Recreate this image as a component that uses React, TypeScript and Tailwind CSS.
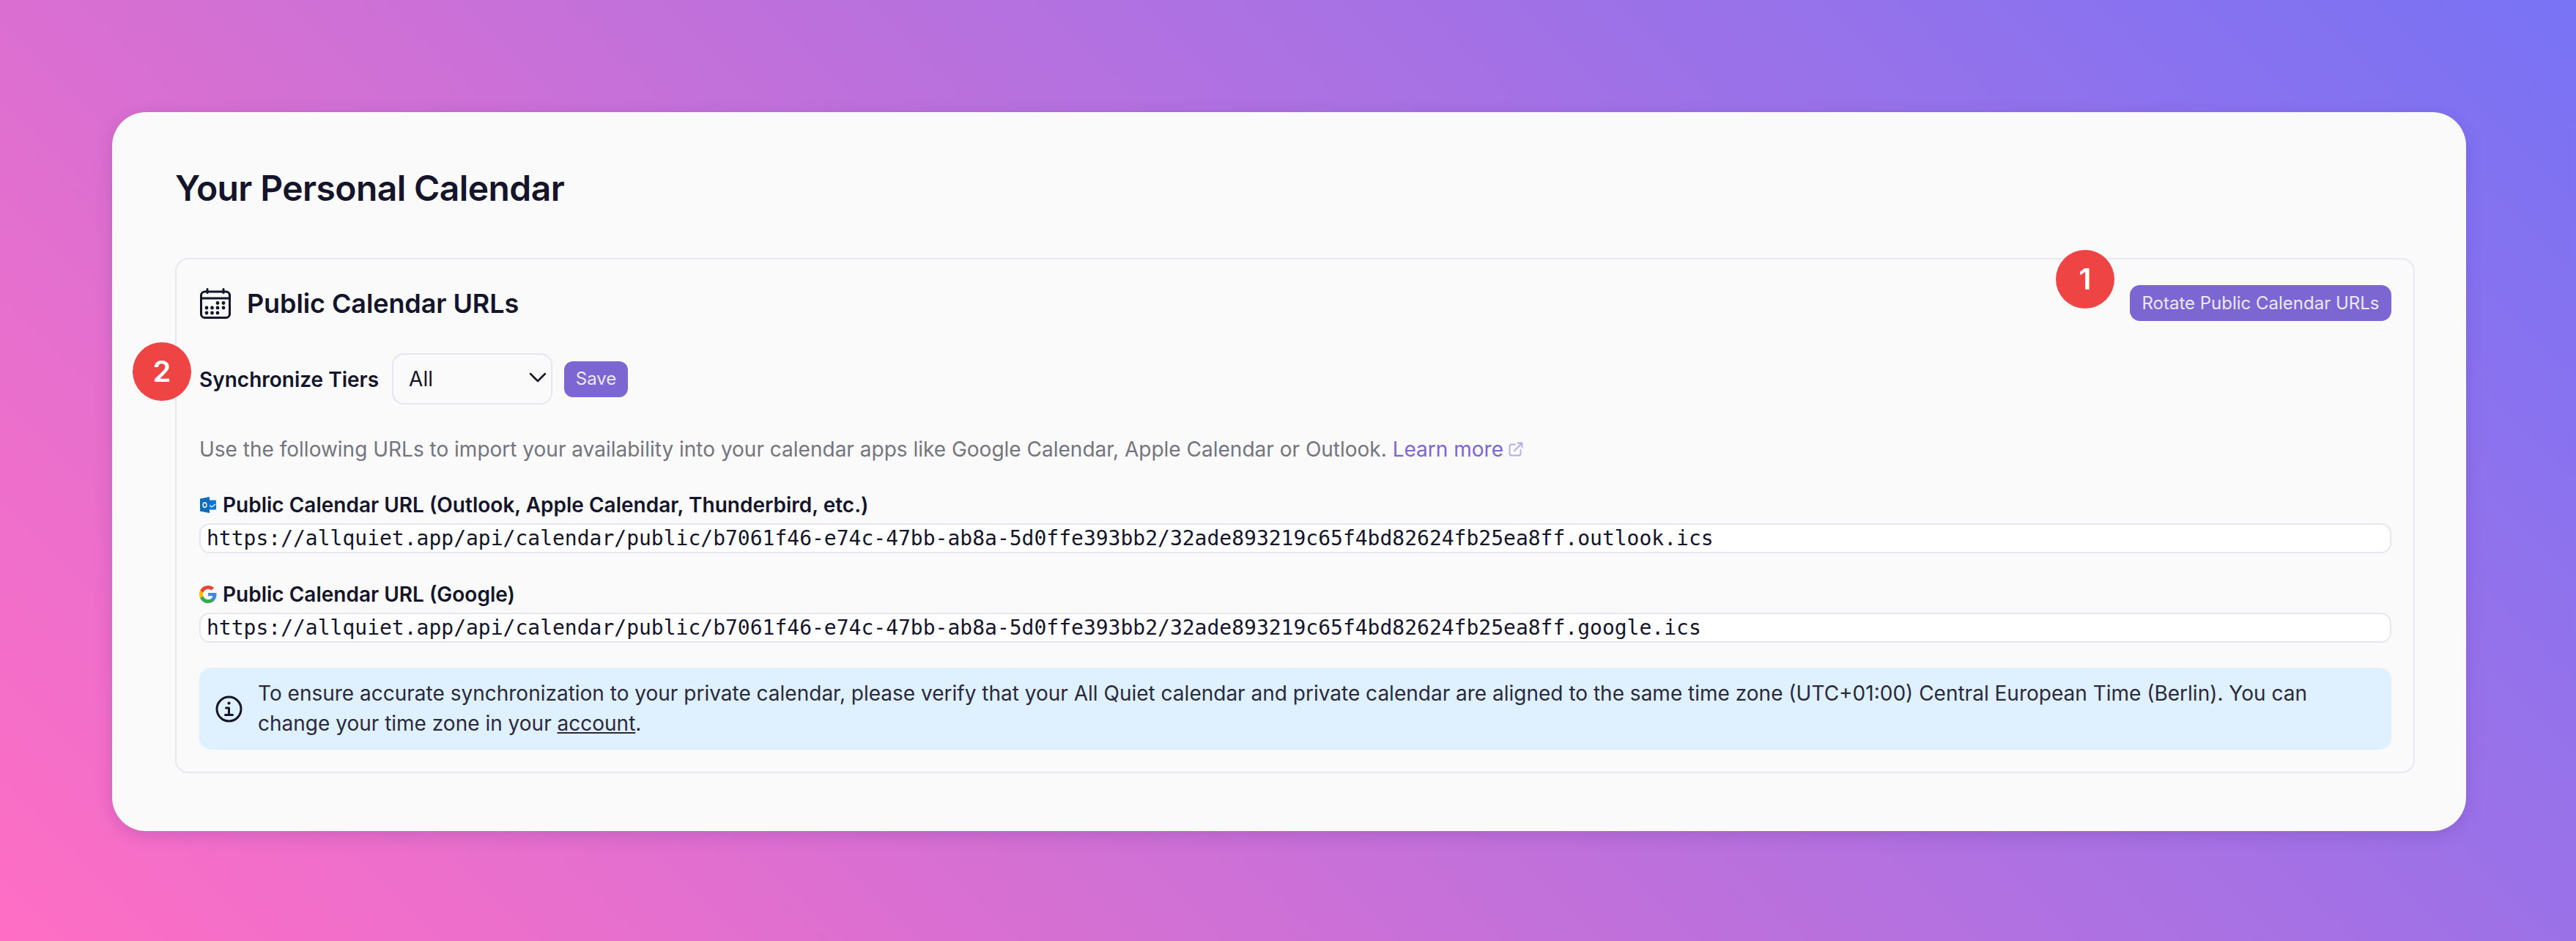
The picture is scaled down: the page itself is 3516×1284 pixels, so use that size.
import React from "react";

const ink = "text-[#14142b]";

function CalendarIcon() {
  return (
    <svg viewBox="0 0 42 42" className="w-[42px] h-[42px] shrink-0" fill="none" stroke="#14142b" strokeWidth="3" strokeLinecap="round">
      <path d="M10 1.5v5M32 1.5v5" />
      <rect x="1.5" y="5" width="39" height="35.5" rx="5" />
      <path d="M1.5 14h39" />
      <g fill="#14142b" stroke="none">
        <circle cx="24" cy="20.5" r="2.4" />
        <circle cx="32" cy="20.5" r="2.4" />
        <circle cx="9" cy="27" r="2.4" />
        <circle cx="16.500" cy="27" r="2.4" />
        <circle cx="24" cy="27" r="2.4" />
        <circle cx="32" cy="27" r="2.4" />
        <circle cx="9" cy="34" r="2.4" />
        <circle cx="16.500" cy="34" r="2.4" />
        <circle cx="24" cy="34" r="2.4" />
      </g>
    </svg>
  );
}

function OutlookIcon() {
  return (
    <svg viewBox="0 0 22 22" className="w-[22px] h-[22px] shrink-0 ml-[1px] mr-[2px]">
      <path d="M10 4.500h11a1 1 0 0 1 1 1v11a1 1 0 0 1-1 1H10z" fill="#0a78d4" />
      <path d="M12 11l4 2.800 5-3.800" fill="none" stroke="#fff" strokeWidth="1.300" />
      <path d="M0 2.500L13 0v22L0 19.500z" fill="#0f6cbd" />
      <ellipse cx="6.500" cy="11" rx="2.400" ry="3.200" fill="none" stroke="#fff" strokeWidth="1.400" />
    </svg>
  );
}

function GoogleIcon() {
  return (
    <svg viewBox="0 0 24 24" className="w-[24px] h-[24px] shrink-0 mr-[1px]">
      <path fill="#4285F4" d="M23.5 12.270c0-.800-.070-1.560-.200-2.300H12v4.350h6.450a5.500 5.500 0 0 1-2.390 3.610v3h3.870c2.260-2.090 3.570-5.160 3.570-8.660z" />
      <path fill="#34A853" d="M12 24c3.240 0 5.950-1.070 7.930-2.900l-3.870-3c-1.070.72-2.440 1.150-4.060 1.150-3.130 0-5.780-2.110-6.730-4.950H1.270v3.100A12 12 0 0 0 12 24z" />
      <path fill="#FBBC05" d="M5.270 14.300a7.200 7.200 0 0 1 0-4.600V6.600h-4a12 12 0 0 0 0 10.800z" />
      <path fill="#EA4335" d="M12 4.750c1.770 0 3.350.610 4.600 1.800l3.430-3.430C17.950 1.190 15.240 0 12 0A12 12 0 0 0 1.270 6.600l4 3.100C6.220 6.860 8.870 4.750 12 4.750z" />
    </svg>
  );
}

function InfoIcon() {
  return (
    <svg viewBox="0 0 37 37" className="w-[37px] h-[37px] shrink-0" fill="none" stroke="#14142b" strokeWidth="3" strokeLinecap="round" strokeLinejoin="round">
      <circle cx="18.500" cy="18.500" r="16.500" />
      <path d="M14.500 17h4v9M13.500 26.500h10" />
      <circle cx="18.500" cy="10.500" r="2.100" fill="#14142b" stroke="none" />
    </svg>
  );
}

function ExternalIcon() {
  return (
    <svg viewBox="0 0 20 20" className="inline-block w-[20px] h-[20px] ml-[7px] align-[0px]" fill="none" stroke="#b5a8ea" strokeWidth="1.800" strokeLinecap="round" strokeLinejoin="round">
      <path d="M9 3.500H4a2.500 2.500 0 0 0-2.500 2.500v10A2.500 2.500 0 0 0 4 18.500h10a2.500 2.500 0 0 0 2.500-2.500v-5" />
      <path d="M8 12L18.500 1.500M12.500 1.500h6v6" />
    </svg>
  );
}

function Badge({ n, className }: { n: string; className: string }) {
  return (
    <div className={`absolute w-[80px] h-[80px] rounded-full bg-[#ef4444] text-white flex items-center justify-center text-[40px] font-semibold leading-none ${className}`}>
      {n}
    </div>
  );
}

function UrlBlock({ icon, label, url, className }: { icon: React.ReactNode; label: string; url: string; className: string }) {
  return (
    <div className={className}>
      <div className={`flex items-center gap-[7px] h-[44px] text-[28px] font-semibold ${ink}`}>
        {icon}
        <span>{label}</span>
      </div>
      <div className={`mt-[3px] h-[41px] flex items-center bg-white border-2 border-[#e6e6f0] rounded-[14px] pl-[8px] text-[28px] text-[#14142b] font-['DejaVu_Sans_Mono',monospace] whitespace-nowrap`}>
        {url}
      </div>
    </div>
  );
}

export default function App() {
  return (
    <div className="w-[3516px] h-[1284px] overflow-hidden pl-[153px] pr-[150px] pt-[153px] bg-[linear-gradient(45deg,#ff6ec4,#7873f5)] font-['Inter',sans-serif]">
      <div className="h-[981px] rounded-[46px] bg-[#fafafa] shadow-[0_6px_24px_rgba(60,30,120,0.18)] pl-[86px] pr-[70px] pt-[74px]">
        <h1 className={`h-[60px] leading-[60px] text-[48px] tracking-[-0.6px] font-semibold ${ink}`}>Your Personal Calendar</h1>
        <div className="relative mt-[65px] h-[703px] rounded-[18px] border-2 border-[#e8e8f0] pl-[31px] pr-[30px] pt-[35px]">
          <Badge n="1" className="left-[2565px] top-[-13px]" />
          <Badge n="2" className="left-[-60px] top-[113px]" />
          <div className="flex items-center justify-between h-[49px]">
            <div className="flex items-center gap-[22px] ml-[1px]">
              <CalendarIcon />
              <span className={`text-[36px] leading-none tracking-[-0.1px] font-semibold ${ink}`}>Public Calendar URLs</span>
            </div>
            <button className="h-[49px] w-[357px] rounded-[14px] bg-[#7c66d1] text-white/85 text-[24px] font-normal">
              Rotate Public Calendar URLs
            </button>
          </div>
          <div className="mt-[44px] flex items-center h-[70px]">
            <span className={`text-[28px] leading-none pt-[2px] font-semibold ${ink}`}>Synchronize Tiers</span>
            <div className="relative ml-[18px] w-[219px] h-[70px]">
              <select className={`w-full h-full appearance-none bg-transparent border-2 border-[#e6e6f0] rounded-[16px] pl-[21px] text-[28px] ${ink}`}>
                <option>All</option>
              </select>
              <svg viewBox="0 0 24 14" className="absolute right-[8px] top-[26px] w-[24px] h-[14px]" fill="none" stroke="#14142b" strokeWidth="2.500" strokeLinecap="round" strokeLinejoin="round">
                <path d="M2 2l10 10L22 2" />
              </svg>
            </div>
            <button className="ml-[16px] w-[87px] h-[49px] rounded-[12px] bg-[#7c66d1] text-white/85 text-[24px] font-normal">Save</button>
          </div>
          <p className="mt-[39px] h-[44px] leading-[44px] text-[28px] text-[#74747f] whitespace-nowrap">
            Use the following URLs to import your availability into your calendar apps like Google Calendar, Apple Calendar or Outlook.{" "}
            <span className="text-[#7c66d1]">Learn more</span>
            <ExternalIcon />
          </p>
          <UrlBlock
            className="mt-[32px]"
            icon={<OutlookIcon />}
            label="Public Calendar URL (Outlook, Apple Calendar, Thunderbird, etc.)"
            url="https://allquiet.app/api/calendar/public/b7061f46-e74c-47bb-ab8a-5d0ffe393bb2/32ade893219c65f4bd82624fb25ea8ff.outlook.ics"
          />
          <UrlBlock
            className="mt-[34px]"
            icon={<GoogleIcon />}
            label="Public Calendar URL (Google)"
            url="https://allquiet.app/api/calendar/public/b7061f46-e74c-47bb-ab8a-5d0ffe393bb2/32ade893219c65f4bd82624fb25ea8ff.google.ics"
          />
          <div className="mt-[34px] h-[112px] rounded-[16px] bg-[#dff0fe] flex items-center pl-[22px] pr-[100px]">
            <InfoIcon />
            <p className={`ml-[21px] text-[28px] leading-[41px] text-[#2a2a3c]`}>
              To ensure accurate synchronization to your private calendar, please verify that your All Quiet calendar and private calendar are aligned to the same time zone (UTC+01:00) Central European Time (Berlin). You can change your time zone in your <span className="underline">account</span>.
            </p>
          </div>
        </div>
      </div>
    </div>
  );
}
